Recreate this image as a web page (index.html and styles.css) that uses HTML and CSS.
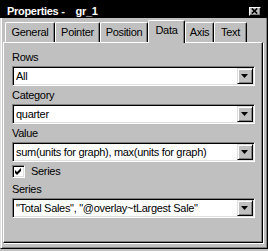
FILE: index.html
```html
<!DOCTYPE html>
<html>
<head>
<meta charset="utf-8">
<link rel="stylesheet" href="styles.css">
</head>
<body>
<div class="win">
  <div class="title">
    <span class="title-a">Properties -</span><span class="title-b">gr_1</span>
    <span class="close"><svg width="7" height="6" viewBox="0 0 7 6"><path d="M0.8 0.5 L6.2 5.5 M6.2 0.5 L0.8 5.5" stroke="#000" stroke-width="1.7" fill="none"/></svg></span>
  </div>
  <div class="frame">
    <div class="tabs">
      <div class="tab t-general">General</div>
      <div class="tab t-pointer">Pointer</div>
      <div class="tab t-position">Position</div>
      <div class="tab t-data sel">Data</div>
      <div class="tab t-axis">Axis</div>
      <div class="tab t-text">Text</div>
    </div>
    <div class="panel">
      <div class="label">Rows</div>
      <div class="combo"><div class="val">All</div><div class="btn"><svg width="7" height="4" viewBox="0 0 7 4"><polygon points="0,0 7,0 3.5,4" fill="#000"/></svg></div></div>
      <div class="label">Category</div>
      <div class="combo"><div class="val">quarter</div><div class="btn"><svg width="7" height="4" viewBox="0 0 7 4"><polygon points="0,0 7,0 3.5,4" fill="#000"/></svg></div></div>
      <div class="label">Value</div>
      <div class="combo"><div class="val">sum(units for graph), max(units for graph)</div><div class="btn"><svg width="7" height="4" viewBox="0 0 7 4"><polygon points="0,0 7,0 3.5,4" fill="#000"/></svg></div></div>
      <div class="check">
        <span class="cbox"><svg width="7" height="7" viewBox="0 0 7 7"><polygon points="0,2 2,4 6,0 6,3 2,7 0,5" fill="#000"/></svg></span>
        <span class="ctext">Series</span>
      </div>
      <div class="label">Series</div>
      <div class="combo"><div class="val">"Total Sales", "@overlay~tLargest Sale"</div><div class="btn"><svg width="7" height="4" viewBox="0 0 7 4"><polygon points="0,0 7,0 3.5,4" fill="#000"/></svg></div></div>
    </div>
  </div>
</div>
</body>
</html>
```
FILE: styles.css
```css
* { box-sizing: border-box; }
body {
  margin: 0;
  background: #c0c0c0;
  font-family: "Liberation Sans", Arial, sans-serif;
  font-size: 11px;
  letter-spacing: -0.3px;
  color: #000;
}
.win {
  width: 268px;
  height: 249px;
  display: flex;
  flex-direction: column;
}
.title {
  height: 18px;
  flex: none;
  background: #000;
  color: #fff;
  font-weight: bold;
  display: flex;
  align-items: flex-start;
  padding: 5px 7px 0 7px;
  line-height: 13px;
  overflow: hidden;
  white-space: pre;
}
.title-b { margin-left: 11px; }
.close {
  margin-left: auto;
  margin-top: 2px;
  width: 12px;
  height: 9px;
  background: #c0c0c0;
  border-top: 1px solid #fff;
  border-left: 1px solid #fff;
  border-right: 1px solid #000;
  border-bottom: 1px solid #000;
  box-shadow: inset -1px -1px 0 #808080;
  display: flex;
  align-items: center;
  justify-content: center;
  padding: 0 1px 1px 0;
}
.close svg { display: block; }
.frame {
  flex: 1;
  display: flex;
  flex-direction: column;
  border-left: 1px solid #dfdfdf;
  border-right: 1px solid #000;
  border-bottom: 1px solid #000;
  box-shadow: inset 1px 0 0 #fff, inset -1px -1px 0 #808080;
  padding: 0 4px 5px 2px;
}
.tabs {
  height: 24px;
  flex: none;
  display: flex;
  align-items: flex-end;
  padding-left: 2px;
}
.tab {
  height: 20px;
  background: #c0c0c0;
  border-top: 1px solid #fff;
  border-left: 1px solid #fff;
  border-right: 1px solid #000;
  border-radius: 2px 2px 0 0;
  box-shadow: inset -1px 0 0 #808080;
  text-align: center;
  padding-top: 3px;
  line-height: 13px;
  white-space: nowrap;
}
.tab.sel {
  height: 23px;
  margin-bottom: -1px;
  position: relative;
  z-index: 1;
  padding-top: 3px;
}
.t-general { width: 50px; }
.t-pointer { width: 45px; }
.t-position { width: 48px; }
.t-data { width: 37px; }
.t-axis { width: 29px; }
.t-text { width: 33px; }
.panel {
  height: 201px;
  flex: none;
  border-top: 1px solid #fff;
  border-left: 1px solid #fff;
  border-right: 1px solid #000;
  border-bottom: 1px solid #000;
  box-shadow: inset -1px -1px 0 #808080, 1px 1px 0 #fff;
  padding: 5px 7px 0 8px;
  display: flex;
  flex-direction: column;
}
.label {
  height: 16px;
  padding-top: 2px;
  line-height: 14px;
  margin-bottom: 2px;
  white-space: nowrap;
}
.combo {
  height: 20px;
  flex: none;
  background: #fff;
  border-top: 1px solid #808080;
  border-left: 1px solid #808080;
  border-right: 1px solid #fff;
  border-bottom: 1px solid #fff;
  box-shadow: inset 1px 1px 0 #000, inset -1px -1px 0 #dfdfdf;
  padding: 1px;
  display: flex;
}
.val {
  flex: 1;
  padding: 1px 0 0 2px;
  line-height: 15px;
  white-space: nowrap;
  overflow: hidden;
}
.btn {
  width: 16px;
  height: 16px;
  flex: none;
  background: #c0c0c0;
  border-top: 1px solid #dfdfdf;
  border-left: 1px solid #dfdfdf;
  border-right: 1px solid #000;
  border-bottom: 1px solid #000;
  box-shadow: inset 1px 1px 0 #fff, inset -1px -1px 0 #808080;
  display: flex;
  align-items: center;
  justify-content: center;
  padding: 0 1px 1px 0;
}
.btn svg { display: block; }
.check {
  height: 18px;
  flex: none;
  display: flex;
  align-items: flex-start;
  padding-top: 3px;
}
.cbox {
  width: 13px;
  height: 13px;
  background: #fff;
  border-top: 1px solid #808080;
  border-left: 1px solid #808080;
  border-right: 1px solid #fff;
  border-bottom: 1px solid #fff;
  box-shadow: inset 1px 1px 0 #000, inset -1px -1px 0 #dfdfdf;
  display: flex;
  align-items: center;
  justify-content: center;
}
.cbox svg { display: block; }
.ctext {
  margin-left: 6px;
  line-height: 13px;
}
```
